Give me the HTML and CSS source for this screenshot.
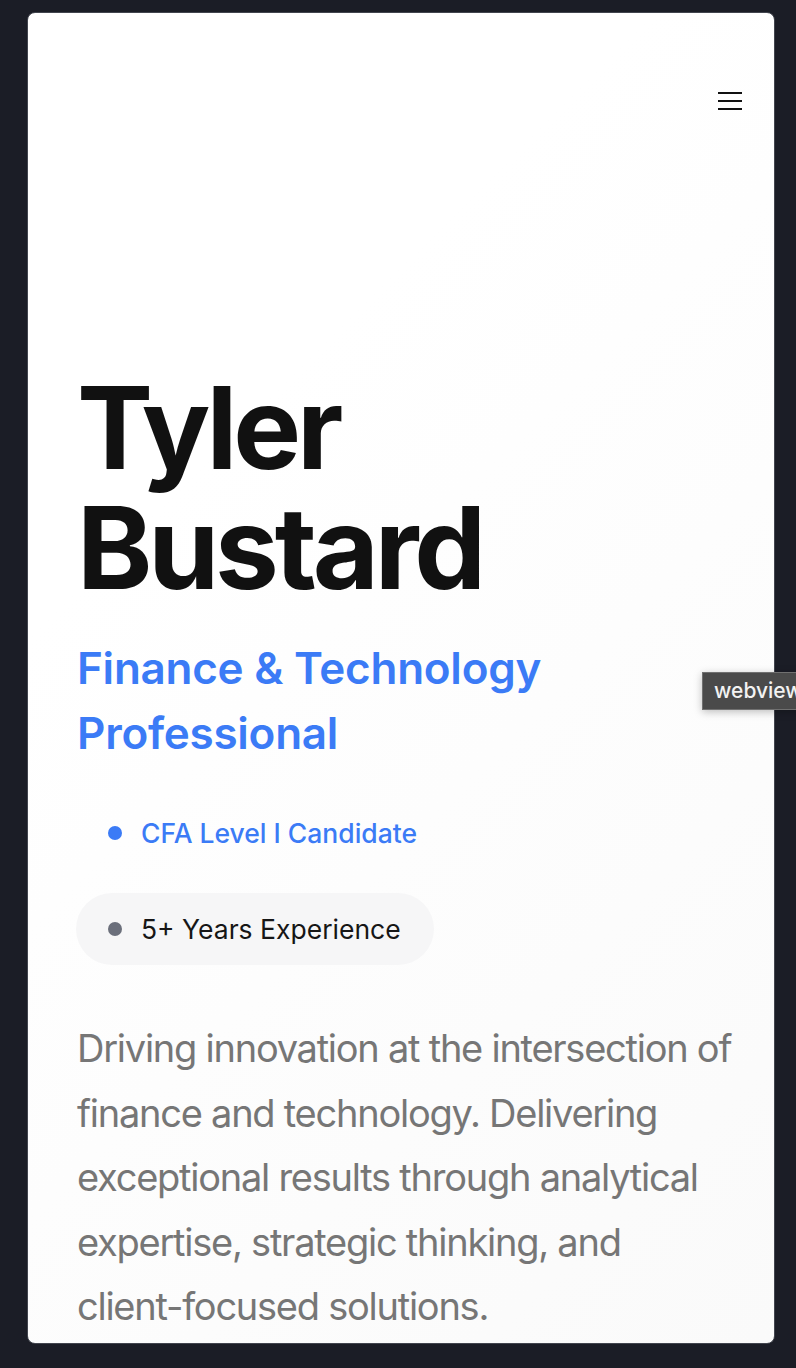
FILE: index.html
```html
<!DOCTYPE html>
<html lang="en">
<head>
<meta charset="utf-8">
<title>Tyler Bustard</title>
<link rel="stylesheet" href="styles.css">
</head>
<body>
<div class="window">
  <header class="topbar">
    <button class="menu" aria-label="Menu">
      <svg width="26" height="20" viewBox="0 0 26 20"><path d="M1 2h24M1 10h24M1 18h24" stroke="#111" stroke-width="2.2" fill="none"/></svg>
    </button>
  </header>
  <main class="hero">
    <h1 class="name">Tyler<br>Bustard</h1>
    <h2 class="role">Finance &amp; Technology<br>Professional</h2>
    <ul class="badges">
      <li class="badge badge-blue"><span class="dot"></span>CFA Level I Candidate</li>
      <li class="badge badge-gray"><span class="dot"></span>5+ Years Experience</li>
    </ul>
    <p class="lead">Driving innovation at the intersection of finance and technology. Delivering exceptional results through analytical expertise, strategic thinking, and client-focused solutions.</p>
  </main>
</div>
<div class="tooltip">webview</div>
</body>
</html>
```
FILE: styles.css
```css
html, body {
  margin: 0;
  padding: 0;
  background: #1b1d26;
  height: 1368px;
  overflow: hidden;
}
body {
  padding: 12px 20px 0 27px;
  box-sizing: border-box;
  font-family: Inter, "Noto Sans", sans-serif;
}
.window {
  width: 748px;
  height: 1332px;
  box-sizing: border-box;
  border: 1px solid #42454e;
  border-radius: 8px;
  background: linear-gradient(135deg, #ffffff 0%, #ffffff 30%, #fafafa 100%);
  overflow: hidden;
}
.topbar {
  display: flex;
  justify-content: flex-end;
  padding: 78px 31px 0 0;
  height: 42px;
}
.menu {
  background: none;
  border: 0;
  padding: 0;
  width: 26px;
  height: 20px;
  display: block;
}
.menu svg { display: block; }
.hero {
  padding: 235px 41px 0 49px;
}
.name {
  margin: 0;
  font-size: 114px;
  line-height: 120px;
  font-weight: 700;
  letter-spacing: -4.2px;
  color: #111111;
}
.role {
  margin: 28px 0 0;
  font-size: 44px;
  line-height: 65px;
  font-weight: 600;
  letter-spacing: -0.25px;
  color: #3b7bf6;
}
.badges {
  list-style: none;
  margin: 31px 0 0 -1px;
  padding: 0;
  display: flex;
  flex-direction: column;
  align-items: flex-start;
  gap: 24px;
}
.badge {
  display: flex;
  align-items: center;
  height: 72px;
  padding: 0 33px 0 32px;
  border-radius: 36px;
  font-size: 26.5px;
  font-weight: 500;
  letter-spacing: 0;
}
.dot {
  width: 14px;
  height: 14px;
  border-radius: 50%;
  margin-right: 19px;
  flex: none;
}
.badge-blue { color: #3b7bf6; }
.badge-blue .dot { background: #3b7bf6; }
.badge-gray { color: #161616; background: #f6f6f7; font-weight: 400; }
.badge-gray .dot { background: #6b6f7b; }
.lead {
  margin: 51px 0 0;
  font-size: 38px;
  line-height: 64.5px;
  font-weight: 400;
  letter-spacing: -1.25px;
  color: #767676;
}
.tooltip {
  position: absolute;
  left: 702px;
  top: 672px;
  width: 110px;
  height: 38px;
  box-sizing: border-box;
  background: #4a4a4a;
  border: 1px solid #707070;
  color: #f2f2f2;
  font-family: Inter, sans-serif;
  font-weight: 500;
  font-size: 21px;
  line-height: 36px;
  padding-left: 11px;
  box-shadow: 0 2px 8px rgba(0,0,0,0.25);
}
```
